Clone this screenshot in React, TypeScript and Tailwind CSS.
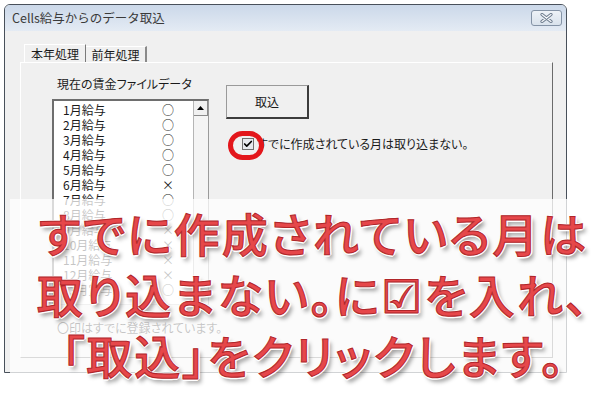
import { Check } from "lucide-react";

const rows: [string, string][] = [
  ["1月給与", "○"],
  ["2月給与", "○"],
  ["3月給与", "○"],
  ["4月給与", "○"],
  ["5月給与", "○"],
  ["6月給与", "×"],
  ["7月給与", "○"],
  ["8月給与", "○"],
  ["9月給与", "×"],
  ["10月給与", "×"],
  ["11月給与", "×"],
  ["12月給与", "×"],
  ["13月賞与", "○"],
];

const lines = ["すでに作成されている月は", "取り込まない。に☑を入れ、", "「取込」をクリックします。"];

export default function App() {
  return (
    <div className="relative h-[394px] w-[601px] overflow-hidden bg-white font-['Noto_Sans_CJK_JP',sans-serif] text-black">
      {/* ── Dialog window ───────────────────────────── */}
      <div className="ml-[4px] mt-[4px] flex h-[369px] w-[563px] flex-col rounded-t-[6px] border border-[#48505a] bg-[#f0f0f0]">
        <div className="flex h-[26px] items-center justify-between rounded-t-[5px] bg-gradient-to-b from-[#cbd8e9] to-[#e4ebf4] pl-[7px] pr-[4px]">
          <span className="text-[12.5px] leading-none text-[#3a3a3a]">Cells給与からのデータ取込</span>
          <div className="flex h-[16px] w-[31px] items-center justify-center rounded-[3px] border border-[#8493a6] bg-gradient-to-b from-[#eef2f7] to-[#d9e2ec]">
            <svg width="13" height="10" viewBox="0 0 13 10">
              <path d="M2 1.5L11 8.5M11 1.5L2 8.5" stroke="#6b7a8c" strokeWidth="3.2" strokeLinecap="round" />
              <path d="M2 1.5L11 8.5M11 1.5L2 8.5" stroke="#f4f6f9" strokeWidth="1.3" strokeLinecap="round" />
            </svg>
          </div>
        </div>

        <div className="flex flex-1 flex-col pb-[14px] pl-[15px] pr-[13px] pt-[13px] [font-feature-settings:'palt']">
          {/* tabs */}
          <div className="flex h-[18px] items-end pl-[4px] text-[12px] leading-none text-[#1a1a1a]">
            <div className="flex h-[18px] w-[62px] items-center justify-center border-l border-r border-t border-l-white border-r-[#7a7a7a] border-t-white">
              本年処理
            </div>
            <div className="flex h-[16px] w-[61px] items-center justify-center border-r-2 border-t border-r-[#8a8a8a] border-t-white">
              前年処理
            </div>
          </div>

          {/* panel */}
          <div className="flex flex-1 border-b border-l border-r border-t border-b-[#6b6b6b] border-l-white border-r-[#6b6b6b] border-t-white pl-[31px] pt-[13px] text-[#1a1a1a]">
            <div className="flex w-[157px] flex-col">
              <div className="pl-[5px] text-[12px] leading-[16px]">現在の賃金ファイルデータ</div>
              <div className="mt-[7px] flex h-[206px] border-b border-l-2 border-r border-t-2 border-b-[#c8c8c8] border-l-[#6e6e6e] border-r-[#9a9a9a] border-t-[#6e6e6e] bg-white">
                <div className="flex-1 pl-[9px] pt-[1px]">
                  {rows.map(([name, mark]) => (
                    <div key={name} className="flex h-[15px] items-center text-[12px] leading-none">
                      <span className="w-[98px]">{name}</span>
                      <span className="w-[14px] text-center">{mark}</span>
                    </div>
                  ))}
                </div>
                <div className="w-[15px] border-l border-[#b5b5b5] bg-[#f4f4f4]">
                  <div className="flex h-[15px] items-center justify-center border-b border-r border-b-[#8a8a8a] border-r-[#8a8a8a] bg-[#f0f0f0]">
                    <svg width="7" height="4" viewBox="0 0 7 4">
                      <path d="M0 4L3.5 0L7 4Z" fill="#000" />
                    </svg>
                  </div>
                </div>
              </div>
              <div className="mt-[15px] whitespace-nowrap pl-[5px] text-[12px] leading-[16px]">〇印はすでに登録されています。</div>
            </div>

            <div className="ml-[17px] flex flex-col">
              <div className="mt-[9px] flex h-[34px] w-[83px] items-center justify-center border-b-2 border-l border-r-2 border-t border-b-[#3c3c3c] border-l-[#9a9a9a] border-r-[#3c3c3c] border-t-[#9a9a9a] bg-[#f0f0f0] text-[12px]">
                取込
              </div>
              <div className="ml-[16px] mt-[19px] flex items-center gap-[3px]">
                <div className="relative flex h-[12px] w-[12px] items-center justify-center border border-[#707070] bg-[#e6e9ee]">
                  <Check className="h-[10px] w-[10px]" strokeWidth={4} color="#000" />
                  <div className="absolute left-[-15px] top-[-8px] h-[29px] w-[36px] rounded-full border-[5px] border-[#e3161b]" />
                </div>
                <span className="whitespace-nowrap text-[12px] leading-none">すでに作成されている月は取り込まない。</span>
              </div>
            </div>
          </div>
        </div>
      </div>

      {/* ── Caption overlay ─────────────────────────── */}
      <div className="absolute bottom-0 left-[10px] right-0 top-[199px] flex flex-col items-center bg-white/75 pl-[16px] pt-[3px]">
        {lines.map((l) => (
          <div
            key={l}
            className="whitespace-nowrap text-[46px] font-medium leading-[61px] tracking-[2px] text-[#e6474a] [-webkit-text-stroke:1px_#b0262a] [font-feature-settings:'palt'] [text-shadow:0_0_2px_#fff,1px_1px_0_#fff,-1px_-1px_0_#fff,1px_-1px_0_#fff,-1px_1px_0_#fff,2px_0_0_#fff,0_2px_0_#fff,3px_4px_4px_rgba(0,0,0,0.4)]"
          >
            {l}
          </div>
        ))}
      </div>
    </div>
  );
}
